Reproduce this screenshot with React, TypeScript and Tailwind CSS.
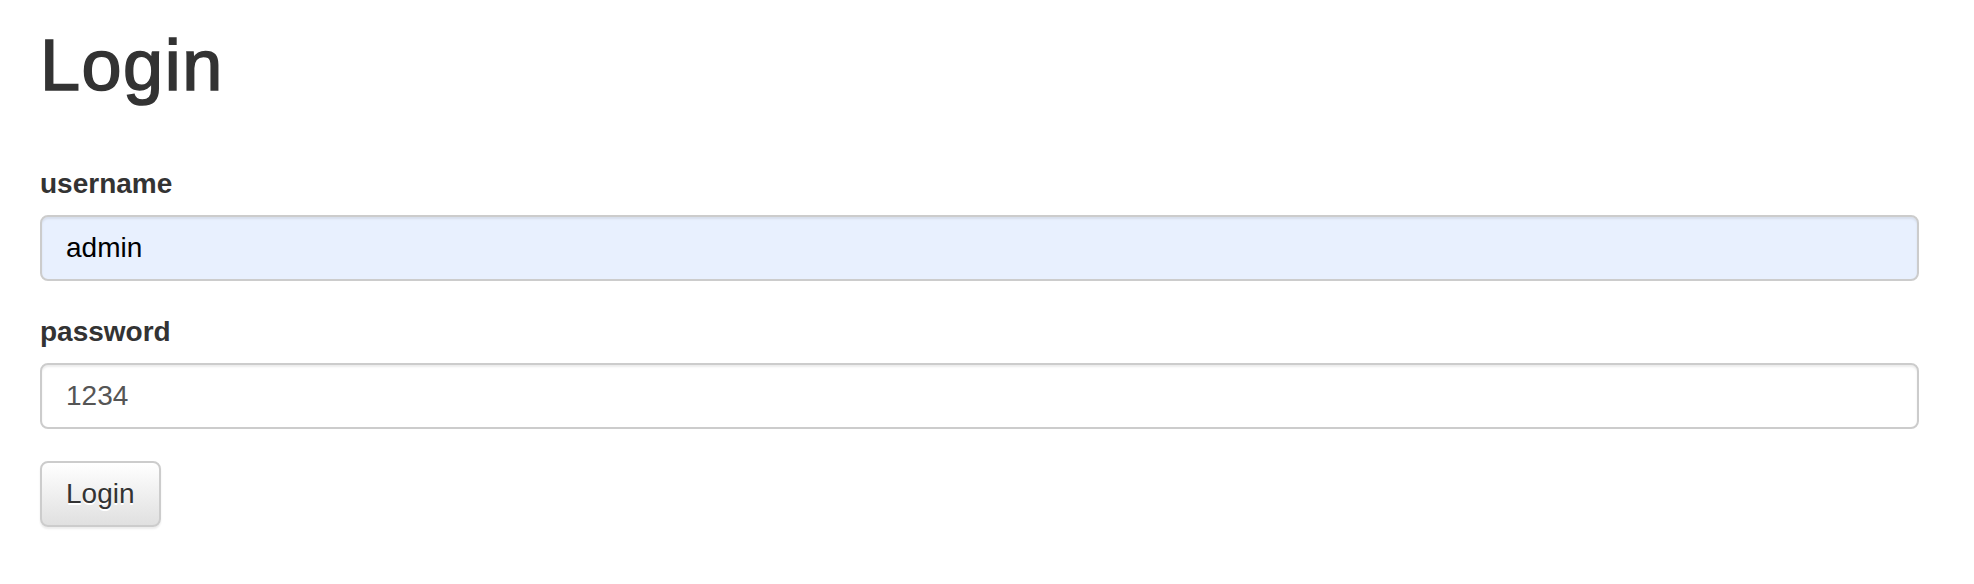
export default function App() {
  return (
    <div className="min-h-screen bg-white pl-[40px] pr-[55px] font-['Liberation_Sans',Arial,sans-serif] text-[#333]">
      <h1 className="pt-[25px] text-[72px] font-normal leading-[80px] tracking-[1.5px] text-[#333] [-webkit-text-stroke:1.6px_#333]">
        Login
      </h1>

      <form className="mt-[59px]" onSubmit={(e) => e.preventDefault()}>
        <div>
          <label htmlFor="username" className="mb-[11px] block text-[28px] font-bold leading-[40px]">
            username
          </label>
          <input
            id="username"
            type="text"
            defaultValue="admin"
            className="block h-[66px] w-full rounded-[8px] border-2 border-[#ccc] bg-[#e8f0fe] px-[24px] text-[28px] text-black shadow-[inset_0_2px_2px_rgba(0,0,0,0.075)] outline-none"
          />
        </div>

        <div className="mt-[31px]">
          <label htmlFor="password" className="mb-[11px] block text-[28px] font-bold leading-[40px]">
            password
          </label>
          <input
            id="password"
            type="text"
            defaultValue="1234"
            className="block h-[66px] w-full rounded-[8px] border-2 border-[#ccc] bg-white px-[24px] text-[28px] text-[#555] shadow-[inset_0_2px_2px_rgba(0,0,0,0.075)] outline-none"
          />
        </div>

        <button
          type="submit"
          className="mt-[32px] h-[66px] rounded-[8px] border-2 border-[#ccc] bg-gradient-to-b from-white to-[#e0e0e0] px-[24px] text-[28px] leading-none text-[#333] shadow-[0_2px_2px_rgba(0,0,0,0.08)] [text-shadow:0_2px_0_#fff]"
        >
          Login
        </button>
      </form>
    </div>
  );
}
